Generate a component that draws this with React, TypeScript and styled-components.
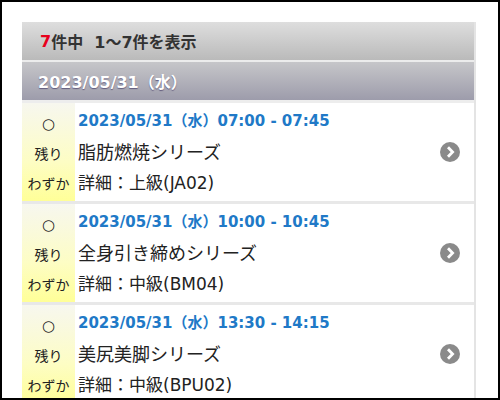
import styled, { createGlobalStyle } from "styled-components";

const GlobalStyle = createGlobalStyle`
  html, body {
    margin: 0;
    padding: 0;
    background: #fff;
  }
  body {
    font-family: "DejaVu Sans", "Noto Sans CJK JP", sans-serif;
  }
`;

const Frame = styled.div`
  width: 500px;
  height: 400px;
  box-sizing: border-box;
  border: 2px solid #000;
  padding: 20px 22px 0 20px;
  overflow: hidden;
  background: #fff;
`;

const Panel = styled.div`
  border-right: 2px solid #e4e4e4;
  background: #fff;
`;

const CountBar = styled.div`
  height: 38px;
  display: flex;
  align-items: center;
  padding-left: 18px;
  background: linear-gradient(#dedede, #bababa);
  border-bottom: 2px solid #ececec;
  font-size: 16px;
  font-weight: bold;
  color: #333;
`;

const Red = styled.span`
  color: #e8001c;
`;

const DateBar = styled.div`
  height: 38px;
  display: flex;
  align-items: center;
  padding-left: 16px;
  background: linear-gradient(#c6c6c9, #9d9cab);
  border-bottom: 3px solid #ededed;
  font-size: 16px;
  font-weight: bold;
  color: #fff;
  text-shadow: 0 1px 1px rgba(40, 30, 80, 0.55);
`;

const Row = styled.div`
  display: flex;
  height: 98px;
  border-bottom: 3px solid #e8e8e8;
`;

const Badge = styled.div`
  width: 53px;
  flex-shrink: 0;
  display: flex;
  flex-direction: column;
  align-items: center;
  justify-content: center;
  padding-top: 4px;
  background: linear-gradient(#f7f7ef, #fdfdc4 60%, #ffff98);
  font-size: 14px;
  line-height: 30px;
  color: #222;
`;

const Circle = styled.div`
  font-size: 15px;
`;

const Body = styled.div`
  flex: 1;
  display: flex;
  flex-direction: column;
  justify-content: center;
  padding-left: 3px;
  line-height: 31px;
`;

const Time = styled.div`
  font-size: 15px;
  font-weight: bold;
  color: #2079c7;
`;

const Title = styled.div`
  font-size: 18px;
  color: #222;
`;

const Detail = styled.div`
  font-size: 17px;
  color: #222;
`;

const Arrow = styled.div`
  width: 48px;
  flex-shrink: 0;
  display: flex;
  align-items: center;
  justify-content: center;
`;

type Lesson = { time: string; title: string; detail: string };

const lessons: Lesson[] = [
  { time: "2023/05/31（水）07:00 - 07:45", title: "脂肪燃焼シリーズ", detail: "詳細：上級(JA02)" },
  { time: "2023/05/31（水）10:00 - 10:45", title: "全身引き締めシリーズ", detail: "詳細：中級(BM04)" },
  { time: "2023/05/31（水）13:30 - 14:15", title: "美尻美脚シリーズ", detail: "詳細：中級(BPU02)" },
];

const ChevronCircle = () => (
  <svg width="20" height="20" viewBox="0 0 20 20">
    <circle cx="10" cy="10" r="10" fill="#8a8a8a" />
    <path d="M8 5.2 L12.6 10 L8 14.8" fill="none" stroke="#fff" strokeWidth="2.8" />
  </svg>
);

export default function App() {
  return (
    <>
      <GlobalStyle />
      <Frame>
        <Panel>
          <CountBar>
            <Red>7</Red>件中&nbsp;&nbsp;1～7件を表示
          </CountBar>
          <DateBar>2023/05/31（水）</DateBar>
          {lessons.map((l) => (
            <Row key={l.time}>
              <Badge>
                <Circle>○</Circle>
                <div>残り</div>
                <div>わずか</div>
              </Badge>
              <Body>
                <Time>{l.time}</Time>
                <Title>{l.title}</Title>
                <Detail>{l.detail}</Detail>
              </Body>
              <Arrow>
                <ChevronCircle />
              </Arrow>
            </Row>
          ))}
        </Panel>
      </Frame>
    </>
  );
}
